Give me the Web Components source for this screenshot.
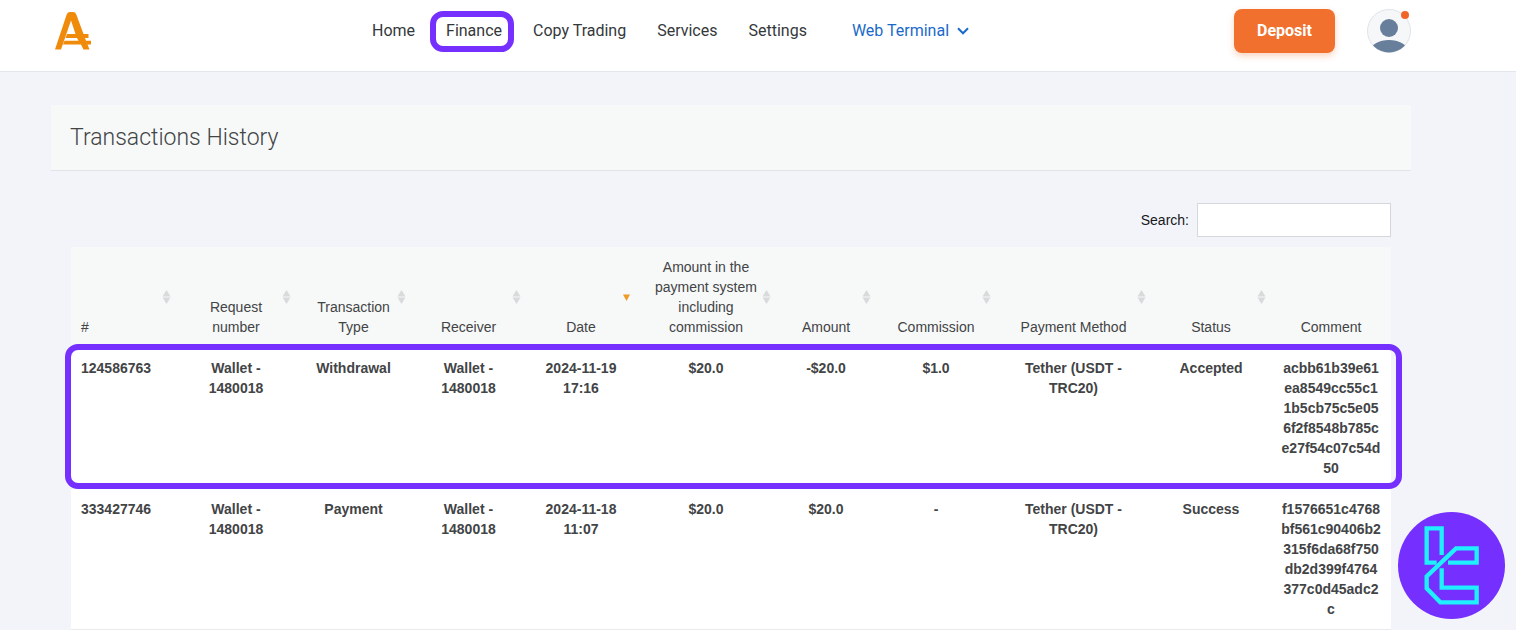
<!DOCTYPE html>
<html lang="en">
<head>
<meta charset="utf-8">
<meta name="viewport" content="width=device-width, initial-scale=1">
<title>Transactions History</title>
<style>
    body {
        margin: 0;
        background: #f3f4f9;
        color: #424446;
        font: 14px/20px "Liberation Sans", Arial, sans-serif;
    }
</style>
</head>
<body>
<top-bar>
    <nav-link href="#home">Home</nav-link>
    <nav-link href="#finance" marked>Finance</nav-link>
    <nav-link href="#copy">Copy Trading</nav-link>
    <nav-link href="#services">Services</nav-link>
    <nav-link href="#settings">Settings</nav-link>
    <nav-link href="#terminal" menu>Web Terminal</nav-link>
</top-bar>
<history-panel>
    <span slot="title">Transactions History</span>
    <transactions-table></transactions-table>
</history-panel>
<brand-badge></brand-badge>

<script>
class NavLink extends HTMLElement {
    constructor() {
        super();
        this.attachShadow({ mode: 'open' });
    }

    connectedCallback() {
        const chevron = `
            <svg width="12" height="8" viewBox="0 0 12 8" aria-hidden="true">
                <path d="M1 1.3 6 6.3 11 1.3" fill="none" stroke="currentColor" stroke-width="2"/>
            </svg>`;
        this.shadowRoot.innerHTML = `
            <style>
                :host { display: block; position: relative; }
                :host([menu]) { margin-left: 14px; }
                a {
                    display: flex;
                    align-items: center;
                    gap: 8px;
                    color: #35383b;
                    text-decoration: none;
                    white-space: nowrap;
                }
                :host([menu]) a { color: #1b6ac9; }
                :host([marked])::after {
                    content: "";
                    position: absolute;
                    inset: -9px -12px -10px -16px;
                    border: 6px solid #752fff;
                    border-radius: 13px;
                    pointer-events: none;
                }
            </style>
            <a href="${this.getAttribute('href')}"><slot></slot>${this.hasAttribute('menu') ? chevron : ''}</a>
        `;
    }
}

class TopBar extends HTMLElement {
    constructor() {
        super();
        this.attachShadow({ mode: 'open' });
        this.shadowRoot.innerHTML = `
            <style>
                :host {
                    display: block;
                    background: #fff;
                    border-bottom: 1px solid #e2e5e9;
                    font-family: Roboto, sans-serif;
                    font-size: 16px;
                    line-height: 22px;
                }
                header {
                    display: flex;
                    align-items: center;
                    padding: 9px 105px 18px 55px;
                }
                .logo { display: block; }
                .logo svg { display: block; }
                nav {
                    display: flex;
                    gap: 31px;
                    margin: 0 auto;
                    padding-left: 15px;
                }
                .deposit {
                    width: 101px;
                    height: 44px;
                    margin-right: 32px;
                    padding: 0;
                    border: 0;
                    border-radius: 8px;
                    background: #f1702d;
                    box-shadow: 0 3px 6px rgba(241, 112, 45, .3);
                    color: #fff;
                    font: 700 16px/22px Roboto, sans-serif;
                }
                .avatar {
                    position: relative;
                    width: 44px;
                    height: 44px;
                    padding: 0;
                    border: 0;
                    background: none;
                }
                .avatar svg { display: block; }
                .avatar::after {
                    content: "";
                    position: absolute;
                    top: 2px;
                    right: 2px;
                    width: 8px;
                    height: 8px;
                    border-radius: 50%;
                    background: #f0662a;
                }
            </style>
            <header>
                <a class="logo" href="#" aria-label="Main page">
                    <svg width="37" height="40" viewBox="0 0 37 40">
                        <path d="M0 38.500 11.500 4Q12.500 1 15 1H18Q20.500 1 21.500 4L28.500 23H33.500V27H30L31 29.700H36V33.500H32.500L34.500 38.500H28.500L26 33.500H8L9.500 29.700H23.500L22 27H10.500L12 23H20.500L16 9.500 6 38.500Z" fill="#f08a0b"/>
                    </svg>
                </a>
                <nav><slot></slot></nav>
                <button class="deposit" type="button">Deposit</button>
                <button class="avatar" type="button" aria-label="Profile">
                    <svg width="44" height="44" viewBox="0 0 44 44">
                        <defs><clipPath id="round"><circle cx="22" cy="22" r="21.500"/></clipPath></defs>
                        <circle cx="22" cy="22" r="21.500" fill="#f5f7f9" stroke="#dfe4ea"/>
                        <g clip-path="url(#round)" fill="#687f9b">
                            <circle cx="22" cy="19" r="9"/>
                            <ellipse cx="22" cy="41" rx="18" ry="10"/>
                        </g>
                    </svg>
                </button>
            </header>
        `;
    }
}

class HistoryPanel extends HTMLElement {
    constructor() {
        super();
        this.attachShadow({ mode: 'open' });
        this.shadowRoot.innerHTML = `
            <style>
                :host { display: block; padding: 33px 105px 0 51px; }
                h1 {
                    margin: 0;
                    padding: 18px 19px 17px;
                    border-bottom: 1px solid #e1e4e6;
                    background: #f7f9f9;
                    font: 300 23px/30px Roboto, sans-serif;
                }
                .body { padding: 32px 20px 0; }
                .search {
                    display: flex;
                    justify-content: flex-end;
                    align-items: center;
                    gap: 8px;
                    margin-bottom: 10px;
                    color: #16181a;
                }
                input {
                    box-sizing: border-box;
                    width: 194px;
                    height: 34px;
                    padding: 6px 12px;
                    border: 1px solid #d5d8db;
                    background: #fff;
                    font: inherit;
                }
            </style>
            <section>
                <h1><slot name="title"></slot></h1>
                <div class="body">
                    <div class="search">
                        <label for="search">Search:</label>
                        <input id="search" type="search">
                    </div>
                    <slot></slot>
                </div>
            </section>
        `;
    }
}

class SortIcon extends HTMLElement {
    connectedCallback() {
        const desc = this.getAttribute('order') === 'desc';
        this.attachShadow({ mode: 'open' });
        this.shadowRoot.innerHTML = `
            <style>
                :host { display: block; }
                svg { display: block; }
            </style>
            <svg width="9" height="14" viewBox="0 0 9 14" aria-hidden="true">
                ${desc
                    ? '<path d="M1 4.500H8L4.500 11Z" fill="#ee9a27"/>'
                    : '<path d="M.5 6.500H8.500L4.500 0ZM.5 7.500H8.500L4.500 14Z" fill="#d9dadb"/>'}
            </svg>
        `;
    }
}

class TransactionsTable extends HTMLElement {
    constructor() {
        super();
        this.attachShadow({ mode: 'open' });

        // label and share of the table's width
        const columns = [
            ['#', 105],
            ['Request number', 120],
            ['Transaction Type', 115],
            ['Receiver', 115],
            ['Date', 110, 'desc'],
            ['Amount in the payment system including commission', 140],
            ['Amount', 100],
            ['Commission', 120],
            ['Payment Method', 155],
            ['Status', 120],
            ['Comment', 120]
        ];
        const rows = [
            ['124586763', 'Wallet - 1480018', 'Withdrawal', 'Wallet - 1480018', '2024-11-19 17:16', '$20.0', '-$20.0', '$1.0',
                'Tether (USDT - TRC20)', 'Accepted', 'acbb61b39e61ea8549cc55c11b5cb75c5e056f2f8548b785ce27f54c07c54d50'],
            ['333427746', 'Wallet - 1480018', 'Payment', 'Wallet - 1480018', '2024-11-18 11:07', '$20.0', '$20.0', '-',
                'Tether (USDT - TRC20)', 'Success', 'f1576651c4768bf561c90406b2315f6da68f750db2d399f4764377c0d45adc2c']
        ];

        const total = columns.reduce((sum, c) => sum + c[1], 0);
        const cols = columns.map(c => `<col style="width: ${c[1] / total * 100}%">`).join('');
        const head = columns.map(([label, , order], i) => `
            <th scope="col">${label}${i < columns.length - 1 ? `<sort-icon order="${order || 'none'}"></sort-icon>` : ''}</th>`).join('');
        const body = rows.map((row, i) => `
            <tr${i === 0 ? ' class="marked"' : ''}>${row.map(cell => `<td>${cell}</td>`).join('')}</tr>`).join('');

        this.shadowRoot.innerHTML = `
            <style>
                :host { display: block; }
                table {
                    width: 100%;
                    table-layout: fixed;
                    border-collapse: separate;
                    border-spacing: 0;
                }
                th, td {
                    position: relative;
                    padding: 10px;
                    border-bottom: 1px solid #e8eaec;
                    text-align: center;
                }
                th {
                    background: #f7f8f8;
                    font-weight: 400;
                    vertical-align: bottom;
                }
                td {
                    background: #fff;
                    font-weight: 700;
                    vertical-align: top;
                }
                th:first-child, td:first-child { text-align: left; }
                td:last-child { word-break: break-all; }
                th:nth-child(6) { padding: 10px 16px; }
                sort-icon { position: absolute; right: 5px; top: 43px; }
                .marked { position: relative; }
                .marked::after {
                    content: "";
                    position: absolute;
                    inset: -4px -11px 0 -6px;
                    border: 6px solid #752fff;
                    border-radius: 13px;
                    pointer-events: none;
                }
            </style>
            <table>
                <colgroup>${cols}</colgroup>
                <thead><tr>${head}</tr></thead>
                <tbody>${body}</tbody>
            </table>
        `;
    }
}

class BrandBadge extends HTMLElement {
    constructor() {
        super();
        this.attachShadow({ mode: 'open' });
        this.shadowRoot.innerHTML = `
            <style>
                :host { display: block; position: fixed; right: 11px; bottom: 11px; }
                svg { display: block; }
            </style>
            <svg width="107" height="107" viewBox="24 21 321 321" role="img" aria-label="TC">
                <circle cx="184.500" cy="181.500" r="160.500" fill="#752fff"/>
                <g fill="none" stroke="#1ff0ff" stroke-width="13">
                    <path d="M155 150V70H110V173H140"/>
                    <path d="M174 173H260V130H198L110 214V250L151 292H260V248H155V190"/>
                </g>
            </svg>
        `;
    }
}

customElements.define('nav-link', NavLink);
customElements.define('top-bar', TopBar);
customElements.define('history-panel', HistoryPanel);
customElements.define('sort-icon', SortIcon);
customElements.define('transactions-table', TransactionsTable);
customElements.define('brand-badge', BrandBadge);
</script>
</body>
</html>
